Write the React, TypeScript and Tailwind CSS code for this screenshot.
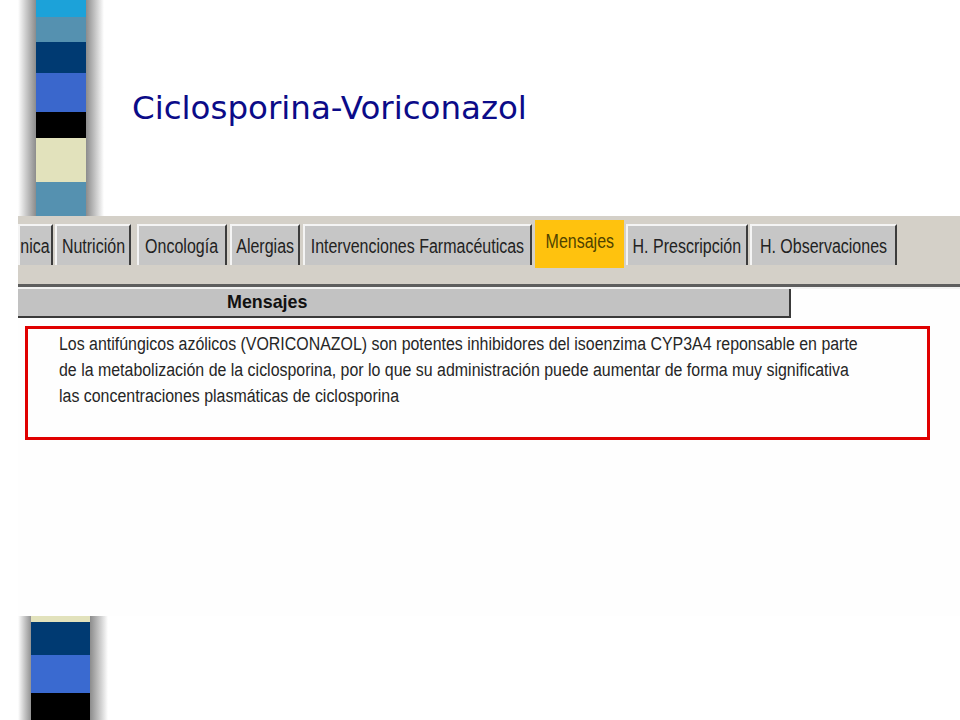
import React from 'react';

const tabs = [
  { label: 'nica', w: 'w-[35px]', ml: 'ml-0', partial: true },
  { label: 'Nutrición', w: 'w-[76px]', ml: 'ml-[2px]' },
  { label: 'Oncología', w: 'w-[90px]', ml: 'ml-[6px]' },
  { label: 'Alergias', w: 'w-[70px]', ml: 'ml-[3px]' },
  { label: 'Intervenciones Farmacéuticas', w: 'w-[229px]', ml: 'ml-[3px]' },
  { label: 'Mensajes', w: 'w-[89px]', ml: 'ml-[3px]', active: true },
  { label: 'H. Prescripción', w: 'w-[122px]', ml: 'ml-[2px]' },
  { label: 'H. Observaciones', w: 'w-[147px]', ml: 'ml-[2px]' },
];

const mensaje = [
  'Los antifúngicos azólicos (VORICONAZOL) son potentes inhibidores del isoenzima CYP3A4 reponsable en parte',
  'de la metabolización de la ciclosporina, por lo que su administración puede aumentar de forma muy significativa',
  'las concentraciones plasmáticas de ciclosporina',
];

function Stripe() {
  return (
    <div className="absolute left-0 top-0 w-[110px] h-full flex flex-col">
      {/* top part, above the screenshot */}
      <div className="flex h-[216px] pl-[18px]">
        <div className="w-[18px] bg-linear-to-r from-white to-[#8c8c8c]" />
        <div className="w-[50px] flex flex-col">
          <div className="h-[17px] bg-[#1ca2d9]" />
          <div className="h-[25px] bg-[#5591b0]" />
          <div className="h-[31px] bg-[#003a72]" />
          <div className="h-[39px] bg-[#3a67cc]" />
          <div className="h-[26px] bg-black" />
          <div className="h-[44px] bg-[#e2e2bc]" />
          <div className="flex-1 bg-[#5591b0]" />
        </div>
        <div className="w-[18px] bg-linear-to-r from-[#8c8c8c] to-white" />
      </div>
      <div className="h-[400px]" />
      {/* bottom part, below the screenshot */}
      <div className="flex h-[104px] pl-[18px]">
        <div className="w-[13px] bg-linear-to-r from-white to-[#929292]" />
        <div className="w-[59px] flex flex-col">
          <div className="h-[6px] bg-[#e2e2bc]" />
          <div className="h-[33px] bg-[#003a72]" />
          <div className="h-[38px] bg-[#3a6ad0]" />
          <div className="flex-1 bg-black" />
        </div>
        <div className="w-[18px] bg-linear-to-r from-[#8c8c8c] to-white" />
      </div>
    </div>
  );
}

function Tab({ t }: { t: (typeof tabs)[number] }) {
  if (t.active) {
    return (
      <div
        className={`${t.ml} ${t.w} h-[48px] -mt-[4px] bg-[#ffc20e] flex items-center justify-center pb-[6px]`}
      >
        <span className="whitespace-nowrap scale-x-[0.8] text-[20px] text-[#4f4200]">
          {t.label}
        </span>
      </div>
    );
  }
  return (
    <div
      className={`${t.ml} ${t.w} h-[41px] bg-[#c6c6c6] border-t-2 border-l-2 border-t-[#f4f4f4] border-l-[#f4f4f4] border-r-2 border-r-[#3c3c3c] flex items-center overflow-hidden ${
        t.partial ? 'justify-end border-l-0 pr-[1px]' : 'justify-center'
      }`}
    >
      <span
        className={`whitespace-nowrap scale-x-[0.8] text-[20px] text-[#222] ${
          t.partial ? 'origin-right' : ''
        }`}
      >
        {t.label}
      </span>
    </div>
  );
}

function Captura() {
  return (
    <div className="ml-[18px] h-[400px] bg-[#fefefe] flex flex-col font-['Liberation_Sans',Arial,sans-serif] overflow-hidden">
      <div className="h-[68px] bg-[#d4d0c8] pt-[8px] flex items-start">
        {tabs.map((t) => (
          <Tab key={t.label} t={t} />
        ))}
      </div>
      <div className="h-[3px] bg-[#5e5e5e]" />
      <div className="h-[2px] bg-[#f2f2f2]" />
      <div className="w-[773px] h-[29px] bg-[#c2c2c2] border-b-2 border-r-2 border-[#3a3a3a] flex items-center pl-[209px]">
        <span className="whitespace-nowrap scale-x-[0.94] origin-left font-bold text-[19px] text-[#111]">
          Mensajes
        </span>
      </div>
      <div className="ml-[7px] mt-[8px] w-[905px] h-[114px] border-[3px] border-[#e00000] pl-[31px] pt-[2px]">
        {mensaje.map((linea) => (
          <div
            key={linea}
            className="whitespace-nowrap origin-left scale-x-[0.885] text-[18px] leading-[26px] text-[#262626]"
          >
            {linea}
          </div>
        ))}
      </div>
    </div>
  );
}

export default function App() {
  return (
    <div className="relative w-[960px] h-[720px] overflow-hidden bg-white">
      <Stripe />
      <div className="relative flex flex-col h-full">
        <div className="h-[216px] pt-[92px] pl-[132px]">
          <h1 className="font-['DejaVu_Sans',Verdana,sans-serif] text-[32.5px] leading-none text-[#0b0b88]">
            Ciclosporina-Voriconazol
          </h1>
        </div>
        <Captura />
      </div>
    </div>
  );
}
